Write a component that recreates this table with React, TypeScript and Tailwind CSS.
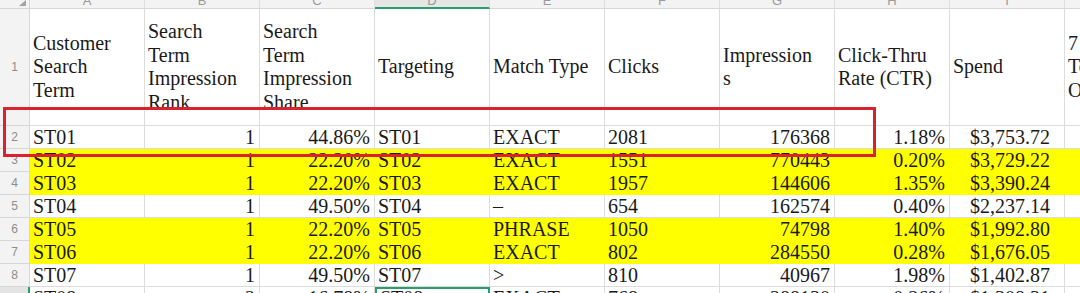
import React from 'react'

const cols = ['A', 'B', 'C', 'D', 'E', 'F', 'G', 'H', 'I', 'J']

// l = left, r = right, a = accounting (right with extra space)
const align = ['l', 'r', 'r', 'l', 'l', 'l', 'r', 'r', 'a', 'l']

const header: string[][] = [
  ['Customer', 'Search', 'Term'],
  ['Search', 'Term', 'Impression', 'Rank'],
  ['Search', 'Term', 'Impression', 'Share'],
  ['Targeting'],
  ['Match Type'],
  ['Clicks'],
  ['Impression', 's'],
  ['Click-Thru', 'Rate (CTR)'],
  ['Spend'],
  ['7 Day', 'Total', 'Orders (#)'],
]

const rows: { cells: string[]; yellow?: boolean }[] = [
  { cells: ['ST01', '1', '44.86%', 'ST01', 'EXACT', '2081', '176368', '1.18%', '$3,753.72', ''] },
  { cells: ['ST02', '1', '22.20%', 'ST02', 'EXACT', '1551', '770443', '0.20%', '$3,729.22', ''], yellow: true },
  { cells: ['ST03', '1', '22.20%', 'ST03', 'EXACT', '1957', '144606', '1.35%', '$3,390.24', ''], yellow: true },
  { cells: ['ST04', '1', '49.50%', 'ST04', '–', '654', '162574', '0.40%', '$2,237.14', ''] },
  { cells: ['ST05', '1', '22.20%', 'ST05', 'PHRASE', '1050', '74798', '1.40%', '$1,992.80', ''], yellow: true },
  { cells: ['ST06', '1', '22.20%', 'ST06', 'EXACT', '802', '284550', '0.28%', '$1,676.05', ''], yellow: true },
  { cells: ['ST07', '1', '49.50%', 'ST07', '>', '810', '40967', '1.98%', '$1,402.87', ''] },
  { cells: ['ST08', '2', '16.78%', 'ST08', 'EXACT', '768', '288130', '0.26%', '$1,308.31', ''] },
]

const alignClass = (a: string) =>
  a === 'r' ? 'justify-end pr-[4px]' : a === 'a' ? 'justify-end pr-[14px]' : 'justify-start pl-[3px]'

export default function App() {
  return (
    <div className="relative w-[1080px] h-[293px] overflow-hidden bg-white">
      <div
        className="grid grid-cols-[30px_repeat(10,115px)] grid-rows-[9px_117px_repeat(8,23px)] text-[20px] text-[#1a1a1a]"
        style={{ fontFamily: '"Liberation Serif", "Noto Sans CJK SC", serif' }}
      >
        {/* column letters */}
        <div className="bg-[#f3f3f3] border-r border-b border-[#d6d6d6] flex justify-end items-start pr-[3px]">
          <svg width="7" height="6" viewBox="0 0 7 6">
            <polygon points="7,0 7,6 0,6" fill="#a3a3a3" />
          </svg>
        </div>
        {cols.map(c => (
          <div
            key={c}
            className={`overflow-hidden flex justify-center border-r border-[#dedede] ${
              c === 'D' ? 'bg-[#e6e6e6] border-b-2 border-b-[#2a9d6c]' : 'bg-[#f3f3f3] border-b border-b-[#d6d6d6]'
            }`}
          >
            <span
              className="block -mt-[6px] leading-[14px] text-[13px] text-[#9a9a9a]"
              style={{ fontFamily: '"Liberation Sans", Arial, sans-serif' }}
            >
              {c}
            </span>
          </div>
        ))}

        {/* row 1 : headers */}
        <div
          className="bg-[#f3f3f3] border-r border-b border-[#d6d6d6] flex items-center justify-center text-[12px] text-[#8c8c8c]"
          style={{ fontFamily: '"Liberation Sans", Arial, sans-serif' }}
        >
          1
        </div>
        {header.map((lines, i) => (
          <div key={i} className="border-r border-b border-[#dcdcdc] flex items-center pl-[3px] overflow-hidden">
            <div className="leading-[23.5px] whitespace-nowrap">
              {lines.map(l => (
                <div key={l}>{l}</div>
              ))}
            </div>
          </div>
        ))}

        {/* data rows */}
        {rows.map((row, r) => {
          const last = r === rows.length - 1
          return (
            <React.Fragment key={r}>
              <div
                className={`flex items-center justify-center text-[12px] text-[#8c8c8c] border-b border-[#d6d6d6] ${
                  last ? 'bg-[#e4e4e4] border-r-2 border-r-[#2a9d6c]' : 'bg-[#f3f3f3] border-r'
                }`}
                style={{ fontFamily: '"Liberation Sans", Arial, sans-serif' }}
              >
                {r + 2}
              </div>
              {row.cells.map((v, c) => {
                const selected = last && c === 3
                const tone = row.yellow
                  ? 'bg-[#ffff00] border-r border-b border-[#ffff00]'
                  : selected
                    ? 'border-2 border-[#2a9d6c]'
                    : 'border-r border-b border-[#dcdcdc]'
                return (
                  <div
                    key={c}
                    className={`flex items-center whitespace-nowrap overflow-hidden leading-[23px] ${tone} ${alignClass(align[c])}`}
                  >
                    {v}
                  </div>
                )
              })}
            </React.Fragment>
          )
        })}
      </div>

      {/* annotation box */}
      <div className="absolute left-[3px] top-[107px] w-[873px] h-[50px] border-[3px] border-[#d9222e]" />
    </div>
  )
}
